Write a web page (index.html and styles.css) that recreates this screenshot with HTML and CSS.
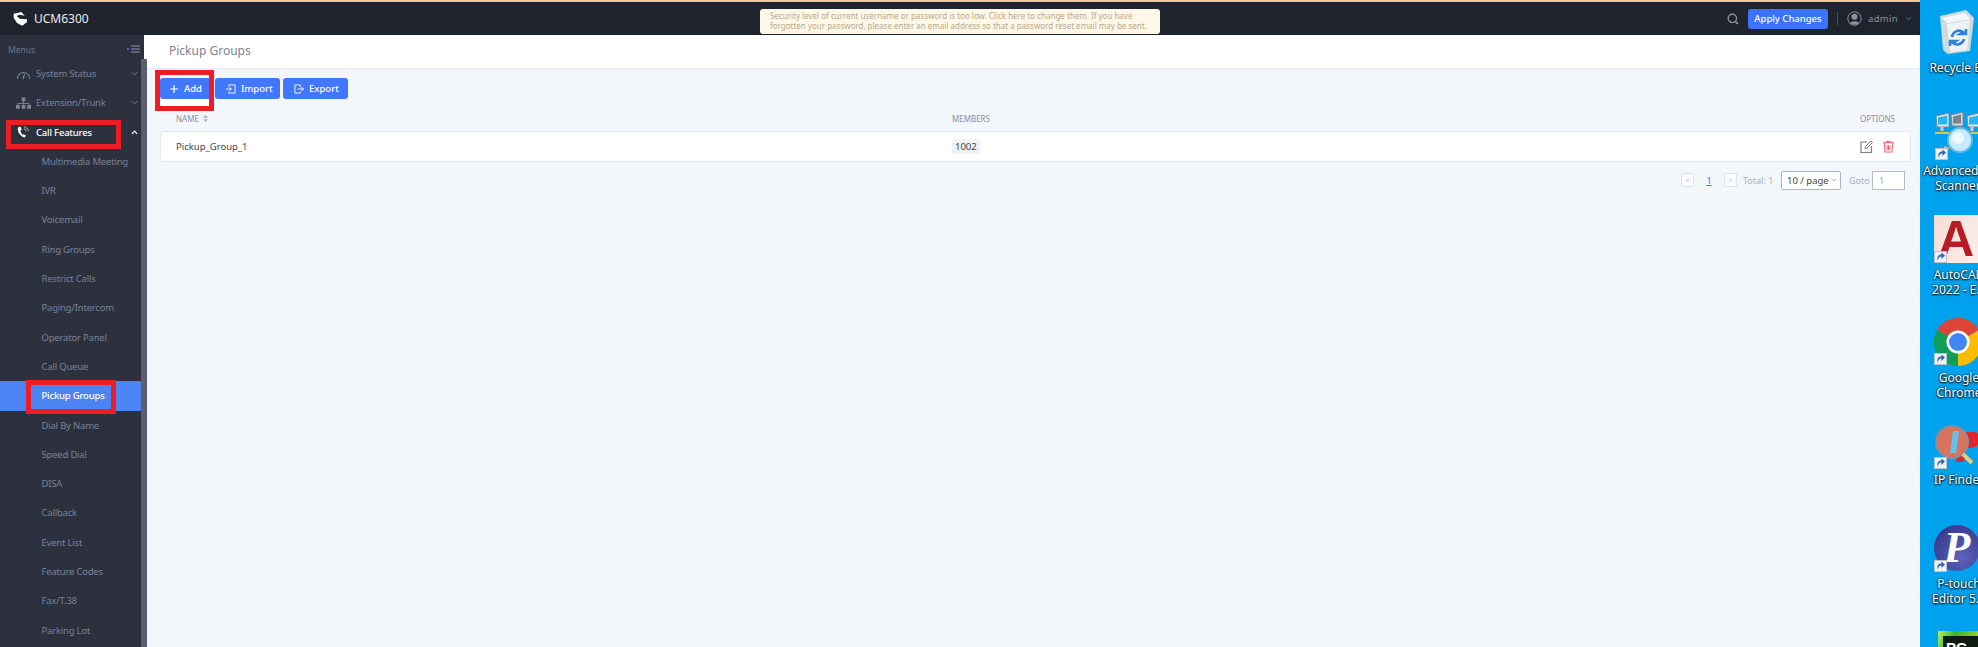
FILE: index.html
```html
<!DOCTYPE html>
<html lang="en">
<head>
  <meta charset="UTF-8" />
  <title>UCM6300 - Pickup Groups</title>
  <meta name="viewport" content="width=device-width, initial-scale=1.0" />
  <link rel="stylesheet" href="styles.css">
</head>
<body>
  <svg class="defs" width="0" height="0">
    <symbol id="shortcut" viewBox="0 0 13 12">
      <rect x=".5" y=".5" width="12" height="11" fill="#eef2f6" stroke="#b9c2cc"/>
      <path d="M4 10c0-3 1-4.500 3.500-4.500V8L11 4.500 7.500 1.500V3.500C4 3.500 2.500 6 4 10z" fill="#2f68ae"/>
    </symbol>
  </svg>

  <div class="window">
    <div class="topline"></div>
    <header class="topbar">
      <div class="brand">
        <svg class="brand-logo" viewBox="0 0 42 42"><path d="M2 5 25 0l10 11-15-3-9 4 9 8 22 2v8L28 41 12 33 2 17z" fill="#fff"/></svg>
        <span>UCM6300</span>
      </div>
      <div class="notice">Security level of current username or password is too low. Click here to change them. If you have forgotten your password, please enter an email address so that a password reset email may be sent.</div>
      <div class="topbar-right">
        <svg class="search-icon" viewBox="0 0 12 12"><circle cx="5.300" cy="5.300" r="4.200" fill="none" stroke="#9aa0ab" stroke-width="1.200"/><path d="M8.500 8.500 11 11" stroke="#9aa0ab" stroke-width="1.400"/></svg>
        <button class="apply-btn">Apply Changes</button>
        <span class="divider"></span>
        <svg class="avatar" viewBox="0 0 15 15"><circle cx="7.500" cy="7.500" r="6.700" fill="none" stroke="#8b909b"/><circle cx="7.500" cy="5.800" r="3" fill="#8b909b"/><path d="M3 12.500c.5-3 8.500-3 9 0-2.500 1.600-6.500 1.600-9 0z" fill="#8b909b"/></svg>
        <span class="admin">admin</span>
        <svg class="chev" viewBox="0 0 8 5"><path d="M1 1l3 3 3-3" fill="none" stroke="#777d89"/></svg>
      </div>
    </header>

    <div class="body-row">
      <aside class="sidebar">
        <div class="menus-row">
          <span>Menus</span>
          <svg class="menus-icon" viewBox="0 0 13 8"><path d="M4 1h9M4 4h9M4 7h9" stroke="#8d95a5"/><circle cx="1" cy="4" r="1" fill="#4d87f6"/></svg>
        </div>
        <div class="nav-group">
          <svg class="nav-icon" viewBox="0 0 16 10"><path d="M1.500 10a6.500 6.500 0 0 1 13 0" fill="none" stroke="#7d8799" stroke-width="1.300" stroke-dasharray="3 .7"/><path d="M6.500 9.500 10 3l-1.500 7z" fill="#7d8799"/></svg>
          <span>System Status</span>
          <svg class="nav-chev" viewBox="0 0 8 5"><path d="M1 1l3 3 3-3" fill="none" stroke="#7d8799"/></svg>
        </div>
        <div class="nav-group">
          <svg class="nav-icon" viewBox="0 0 16 12"><path d="M6 0h4v4H6zM0 8h4v4H0zM6 8h4v4H6zM12 8h4v4h-4z" fill="#7d8799"/><path d="M8 4v2M2 8V6.500h12V8M8 6v2" fill="none" stroke="#7d8799"/></svg>
          <span>Extension/Trunk</span>
          <svg class="nav-chev" viewBox="0 0 8 5"><path d="M1 1l3 3 3-3" fill="none" stroke="#7d8799"/></svg>
        </div>
        <div class="nav-group open">
          <svg class="nav-icon" viewBox="0 0 16 14"><path d="M2 1.500c-2 3 1 10 7 12l2-2-3-2-1 1C5.500 8.500 4.500 6.500 4.500 5L6 4.500 4.500 1z" fill="#fff"/><path d="M8.500 3.500a2.500 2.500 0 0 1 2.500 2.500M8.500 1A5 5 0 0 1 13.500 6" fill="none" stroke="#c6cad2"/></svg>
          <span>Call Features</span>
          <svg class="nav-chev" viewBox="0 0 8 5"><path d="M1 4l3-3 3 3" fill="none" stroke="#fff" stroke-width="1.400"/></svg>
        </div>
        <ul class="subnav">
          <li>Multimedia Meeting</li>
          <li>IVR</li>
          <li>Voicemail</li>
          <li>Ring Groups</li>
          <li>Restrict Calls</li>
          <li>Paging/Intercom</li>
          <li>Operator Panel</li>
          <li>Call Queue</li>
          <li class="active">Pickup Groups</li>
          <li>Dial By Name</li>
          <li>Speed Dial</li>
          <li>DISA</li>
          <li>Callback</li>
          <li>Event List</li>
          <li>Feature Codes</li>
          <li>Fax/T.38</li>
          <li>Parking Lot</li>
        </ul>
      </aside>

      <main class="main">
        <div class="title-bar">Pickup Groups</div>
        <div class="content">
          <div class="toolbar">
            <button class="btn add-btn"><svg class="btn-icon" viewBox="0 0 10 10"><path d="M5 1v8M1 5h8" stroke="#fff" stroke-width="1.200"/></svg>Add</button>
            <button class="btn"><svg class="btn-icon" viewBox="0 0 11 11"><path d="M3 3V1h7v9H3V8.500" fill="none" stroke="#fff"/><path d="M0 5.500h5.500M4 3.500l2 2-2 2" fill="none" stroke="#fff"/></svg>Import</button>
            <button class="btn"><svg class="btn-icon" viewBox="0 0 11 11"><path d="M7 3.500V1H1v9h6V8.500" fill="none" stroke="#fff"/><path d="M4 5.500h6.500M8.500 3.500l2 2-2 2" fill="none" stroke="#fff"/></svg>Export</button>
          </div>

          <div class="table-head">
            <div class="col-name">NAME <svg class="sort" viewBox="0 0 6 9"><path d="M3 0l3 3.500H0zM3 9 0 5.500h6z" fill="#a9afbb"/></svg></div>
            <div class="col-members">MEMBERS</div>
            <div class="col-options">OPTIONS</div>
          </div>
          <div class="table-row">
            <div class="col-name">Pickup_Group_1</div>
            <div class="col-members"><span class="tag">1002</span></div>
            <div class="col-options row-icons">
              <svg class="row-icon" viewBox="0 0 13 13"><path d="M7 2H1v10.500h10.500V6" fill="none" stroke="#78808f" stroke-width="1.200"/><path d="M5 8.500l.5-2L11 1l1.500 1.500L7 8z" fill="none" stroke="#78808f"/></svg>
              <svg class="row-icon trash" viewBox="0 0 12 13"><path d="M0 2.500h12M4 2.500V1h4v1.500M1.500 3l.7 9.500h7.600L10.500 3M4.500 5v5.500M6 5v5.500M7.500 5v5.500" fill="none" stroke="#f4606c" stroke-width="1.100"/></svg>
            </div>
          </div>

          <div class="pagination">
            <span class="page-box">&lt;</span>
            <span class="page-num">1</span>
            <span class="page-box">&gt;</span>
            <span class="total">Total: 1</span>
            <div class="page-size">10 / page <svg viewBox="0 0 8 5"><path d="M1 1l3 3 3-3" fill="none" stroke="#8a909c"/></svg></div>
            <span class="goto">Goto</span>
            <div class="goto-input">1</div>
          </div>
        </div>
      </main>
    </div>
  </div>

  <div class="desktop">
    <div class="dk-item dk-recycle">
      <svg class="dk-art" viewBox="0 0 37 44"><path d="M2 6 28 0l8 8-4 33-22 3L5 40z" fill="#cfd9df"/><path d="M4 8 27 3l6 6-24 4z" fill="#f4f7f9"/><path d="M9 14l23-4-3 30-17 2z" fill="#eef2f5"/><path d="M14 27a7 7 0 0 1 11-5l-3 2h6v-5M26 29a7 7 0 0 1-11 4l3-2h-6v5" fill="none" stroke="#2f80d8" stroke-width="2.600"/></svg>
      <div class="dk-label">Recycle Bin</div>
    </div>
    <div class="dk-item dk-scanner">
      <svg class="dk-art" viewBox="0 0 43 48"><path d="M1 4l13-3v14H2z" fill="#e3e6ea" stroke="#7e8690"/><path d="M3 5.500l9-2v9H3z" fill="#22b9f2"/><path d="M16 3l12-3v14H17z" fill="#d5d8dd" stroke="#7e8690"/><path d="M18 4.500l8-2v9h-8z" fill="#7c838b"/><path d="M32 4l12-3v14H33z" fill="#e3e6ea" stroke="#7e8690"/><path d="M34 5.500l9-2v9h-9z" fill="#22b9f2"/><path d="M7 15v4M37 15v4" stroke="#c9ccd0" stroke-width="3"/><path d="M0 21h15M30 21h13" stroke="#e7c53d" stroke-width="2"/><path d="M12 35 9 41" stroke="#f0c22c" stroke-width="5"/><circle cx="25" cy="28" r="12" fill="#c6ecfc" stroke="#63b9ec" stroke-width="2"/><circle cx="23" cy="26" r="6" fill="#effafe"/></svg>
      <svg class="dk-arrow"><use href="#shortcut"/></svg>
      <div class="dk-label">Advanced IP<br>Scanner</div>
    </div>
    <div class="dk-item dk-autocad">
      <div class="autocad-tile">A</div>
      <svg class="dk-arrow"><use href="#shortcut"/></svg>
      <div class="dk-label">AutoCAD<br>2022 - E...</div>
    </div>
    <div class="dk-item dk-chrome">
      <svg class="dk-art" viewBox="0 0 48 48"><path d="M24 24 3.200 12A24 24 0 0 1 44.800 12z" fill="#db4437"/><path d="M24 24 3.200 12A24 24 0 0 0 24 48z" fill="#0f9d58"/><path d="M24 24 44.800 12A24 24 0 0 1 24 48z" fill="#fbbc05"/><circle cx="24" cy="24" r="11.500" fill="#fff"/><circle cx="24" cy="24" r="9" fill="#4285f4"/></svg>
      <svg class="dk-arrow"><use href="#shortcut"/></svg>
      <div class="dk-label">Google<br>Chrome</div>
    </div>
    <div class="dk-item dk-finder">
      <svg class="dk-art" viewBox="0 0 46 44"><path d="M30 8h10c8 0 7 16-3 16h-5l-2 14h-8z" fill="#e2242b"/><circle cx="18" cy="18" r="16" fill="#d8735e" stroke="#8a8f96" stroke-width="2"/><path d="M19 7h6l-3 22h-6z" fill="#63c1ee"/><path d="M29 30l9 9" stroke="#e8c77e" stroke-width="4"/></svg>
      <svg class="dk-arrow"><use href="#shortcut"/></svg>
      <div class="dk-label">IP Finder</div>
    </div>
    <div class="dk-item dk-ptouch">
      <div class="ptouch-ball">P</div>
      <svg class="dk-arrow"><use href="#shortcut"/></svg>
      <div class="dk-label">P-touch<br>Editor 5.4</div>
    </div>
    <div class="dk-item dk-pc">
      <div class="pc-tile"><div class="pc-screen">PC</div></div>
    </div>
  </div>

  <!-- red annotation boxes drawn over the screenshot -->
  <div class="mark mark-add"></div>
  <div class="mark mark-call"></div>
  <div class="mark mark-pickup"></div>
  <div class="scroll-thumb"></div>
</body>
</html>
```

FILE: styles.css
```css
html, body {
  margin: 0;
  height: 647px;
  overflow: hidden;
}
body {
  position: relative;
  display: flex;
  width: 1978px;
  font-family: "Noto Sans", "Open Sans", sans-serif;
  font-size: 10px;
  color: #333;
  background: #f3f6fa;
}
.defs {
  position: absolute;
}
.window {
  flex: 0 0 1920px;
  display: flex;
  flex-direction: column;
  height: 647px;
}
.topline {
  height: 2px;
  background: #f4c58f;
}
.topbar {
  height: 33px;
  flex: none;
  display: flex;
  align-items: center;
  background: #1f232e;
}
.brand {
  width: 760px;
  display: flex;
  align-items: center;
  padding-left: 13px;
  box-sizing: border-box;
  color: #e9ebef;
  font-size: 12px;
}
.brand-logo {
  width: 14px;
  height: 14px;
  margin-right: 7px;
}
.notice {
  width: 400px;
  height: 25px;
  margin-top: 5px;
  padding: 2px 10px;
  box-sizing: border-box;
  border-radius: 3px;
  background: #fff8e8;
  color: #b9a888;
  font-size: 8px;
  line-height: 10.500px;
}
.topbar-right {
  flex: 1;
  display: flex;
  align-items: center;
  padding-left: 567px;
}
.search-icon {
  width: 12px;
  height: 12px;
  margin-right: 9px;
}
.apply-btn {
  width: 80px;
  height: 20px;
  padding: 0;
  border: none;
  border-radius: 3px;
  background: #3d72fb;
  color: #fff;
  font: 500 9.500px "Noto Sans", sans-serif;
}
.divider {
  width: 1px;
  height: 13px;
  margin: 0 9px;
  background: #4d525d;
}
.avatar {
  width: 15px;
  height: 15px;
  margin-right: 6px;
}
.admin {
  color: #8b909b;
  font-size: 9.500px;
  letter-spacing: .3px;
}
.chev {
  width: 7px;
  height: 5px;
  margin-left: 7px;
}

.body-row {
  flex: 1;
  display: flex;
  min-height: 0;
}
.sidebar {
  flex: 0 0 144px;
  background: #2d313e;
  color: #75819a;
  font-size: 9.500px;
  letter-spacing: -.2px;
  overflow: hidden;
}
.menus-row {
  height: 24px;
  padding: 4px 4px 0 8px;
  box-sizing: border-box;
  display: flex;
  align-items: center;
  justify-content: space-between;
  font-size: 8.500px;
  letter-spacing: 0;
  color: #69748a;
}
.menus-icon {
  width: 13px;
  height: 8px;
}
.nav-group {
  height: 29.300px;
  display: flex;
  align-items: center;
  padding: 0 6px 0 16px;
}
.nav-group span {
  flex: 1;
}
.nav-group.open {
  color: #fff;
  font-weight: 500;
}
.nav-icon {
  width: 15px;
  height: 12px;
  margin-right: 5px;
}
.nav-chev {
  width: 7px;
  height: 5px;
}
.subnav {
  margin: 0;
  padding: 0;
  list-style: none;
}
.subnav li {
  height: 29.300px;
  line-height: 29.300px;
  padding-left: 41.500px;
  white-space: nowrap;
}
.subnav li.active {
  background: #4c84f3;
  color: #fff;
  font-weight: 500;
}

.main {
  flex: 1;
  display: flex;
  flex-direction: column;
  min-width: 0;
}
.title-bar {
  height: 33px;
  line-height: 31px;
  padding-left: 25px;
  background: #fff;
  color: #7d8490;
  font-size: 12px;
  box-shadow: 0 1px 2px rgba(0, 0, 0, .06);
}
.content {
  flex: 1;
  padding: 10px 9px 0 16px;
}
.toolbar {
  display: flex;
  gap: 3px;
}
.btn {
  width: 65px;
  height: 21px;
  padding: 0 0 0 11px;
  display: flex;
  align-items: center;
  border: none;
  border-radius: 3px;
  background: #4178fb;
  color: #fff;
  font: 500 9.500px "Noto Sans", sans-serif;
}
.add-btn {
  width: 52px;
  padding-left: 9px;
}
.btn-icon {
  width: 10px;
  height: 10px;
  margin-right: 5px;
}
.table-head {
  display: flex;
  align-items: center;
  height: 21px;
  margin-top: 9px;
  padding: 0 16px 0 16px;
  font-size: 8px;
  color: #8a90a0;
}
.table-row {
  display: flex;
  align-items: center;
  height: 31px;
  margin-top: 2px;
  padding: 0 16px 0 15px;
  box-sizing: border-box;
  border: 1px solid #e4e8ef;
  border-radius: 3px;
  background: #fff;
  color: #444;
  font-size: 9.500px;
}
.col-name {
  width: 776px;
}
.sort {
  width: 5px;
  height: 7px;
  margin-left: 2px;
}
.col-members {
  flex: 1;
}
.col-options {
  width: 60px;
  text-align: right;
}
.tag {
  display: inline-block;
  padding: 1px 3px;
  border-radius: 2px;
  background: #eef1f6;
}
.row-icons {
  display: flex;
  justify-content: flex-end;
  gap: 10px;
}
.row-icon {
  width: 13px;
  height: 13px;
}
.row-icon.trash {
  width: 11px;
}
.pagination {
  display: flex;
  align-items: center;
  justify-content: flex-end;
  height: 20px;
  margin-top: 8px;
  padding-right: 6px;
  color: #a9afba;
  font-size: 9px;
}
.page-box {
  width: 13px;
  height: 14px;
  line-height: 13px;
  box-sizing: border-box;
  text-align: center;
  border: 1px solid #dfe3ea;
  border-radius: 2px;
  background: #fafbfc;
  font-size: 7px;
  color: #c3c8d1;
}
.page-num {
  width: 30px;
  text-align: center;
  color: #3d72fb;
  text-decoration: underline;
}
.total {
  width: 28px;
  margin: 0 10px 0 6px;
  white-space: nowrap;
}
.page-size {
  width: 60px;
  height: 19px;
  line-height: 18px;
  padding-left: 5px;
  box-sizing: border-box;
  border: 1px solid #aab1bf;
  border-radius: 2px;
  background: #fff;
  color: #444;
  font-size: 9.500px;
  white-space: nowrap;
}
.page-size svg {
  width: 6px;
  height: 4px;
  vertical-align: 2px;
}
.goto {
  width: 18px;
  margin: 0 5px 0 8px;
  white-space: nowrap;
}
.goto-input {
  width: 33px;
  height: 19px;
  line-height: 17px;
  padding-left: 6px;
  box-sizing: border-box;
  border: 1px solid #b5bbc8;
  background: #fff;
}

.desktop {
  position: relative;
  flex: 0 0 58px;
  height: 647px;
  overflow: hidden;
  background: #00a2ed;
}
.dk-item {
  position: absolute;
  left: 14px;
  width: 60px;
}
.dk-art {
  display: block;
}
.dk-label {
  position: absolute;
  left: -13px;
  width: 76px;
  text-align: center;
  color: #fff;
  font-size: 12px;
  line-height: 15px;
  text-shadow: 0 1px 2px #000, 0 0 2px #000;
  white-space: nowrap;
}
.dk-arrow {
  position: absolute;
  left: 0;
  width: 13px;
  height: 12px;
}
.dk-recycle {
  top: 10px;
  left: 18px;
}
.dk-recycle .dk-art {
  width: 37px;
  height: 44px;
}
.dk-recycle .dk-label {
  top: 50px;
  left: -15px;
}
.dk-scanner {
  top: 112px;
  left: 15px;
}
.dk-scanner .dk-art {
  width: 43px;
  height: 48px;
}
.dk-scanner .dk-arrow {
  top: 36px;
}
.dk-scanner .dk-label {
  top: 51px;
  left: -15px;
}
.dk-autocad {
  top: 215px;
}
.autocad-tile {
  width: 44px;
  height: 48px;
  background: linear-gradient(120deg, #f6dcd6, #fbeeea);
  color: #b51c25;
  font: bold 50px/48px "Liberation Sans", sans-serif;
  text-align: center;
}
.dk-autocad .dk-arrow {
  top: 36px;
}
.dk-autocad .dk-label {
  top: 52px;
}
.dk-chrome {
  top: 318px;
}
.dk-chrome .dk-art {
  width: 48px;
  height: 48px;
}
.dk-chrome .dk-arrow {
  top: 35px;
}
.dk-chrome .dk-label {
  top: 52px;
}
.dk-finder {
  top: 424px;
}
.dk-finder .dk-art {
  width: 46px;
  height: 44px;
}
.dk-finder .dk-arrow {
  top: 33px;
}
.dk-finder .dk-label {
  top: 48px;
}
.dk-ptouch {
  top: 525px;
}
.ptouch-ball {
  width: 46px;
  height: 46px;
  border-radius: 50%;
  background: radial-gradient(circle at 60% 70%, #5c62bb, #2d2f80);
  color: #fff;
  font: italic bold 44px/46px "Liberation Serif", serif;
  text-align: center;
}
.dk-ptouch .dk-arrow {
  top: 35px;
}
.dk-ptouch .dk-label {
  top: 51px;
}
.dk-pc {
  top: 631px;
  left: 18px;
}
.pc-tile {
  width: 40px;
  height: 26px;
  padding: 5px 0 0 5px;
  box-sizing: border-box;
  background: linear-gradient(120deg, #bff26a, #37b52c 35%, #d8dc2a);
}
.pc-screen {
  height: 21px;
  padding: 4px 0 0 3px;
  box-sizing: border-box;
  background: #0f1a12;
  color: #fff;
  font: bold 15px/15px "Liberation Sans", sans-serif;
}

.mark {
  position: absolute;
  box-sizing: border-box;
  border: 5px solid #ee1c25;
}
.mark-add {
  left: 155px;
  top: 70px;
  width: 59px;
  height: 41px;
}
.mark-add::after {
  content: "";
  position: absolute;
  left: 0;
  right: 0;
  bottom: 0;
  height: 7px;
  background: #fff;
}
.mark-call {
  left: 6px;
  top: 120px;
  width: 115px;
  height: 29px;
}
.mark-pickup {
  left: 26px;
  top: 380px;
  width: 90px;
  height: 34px;
}
.scroll-thumb {
  position: absolute;
  left: 141px;
  top: 59px;
  width: 6px;
  height: 588px;
  background: #585e70;
}
```
